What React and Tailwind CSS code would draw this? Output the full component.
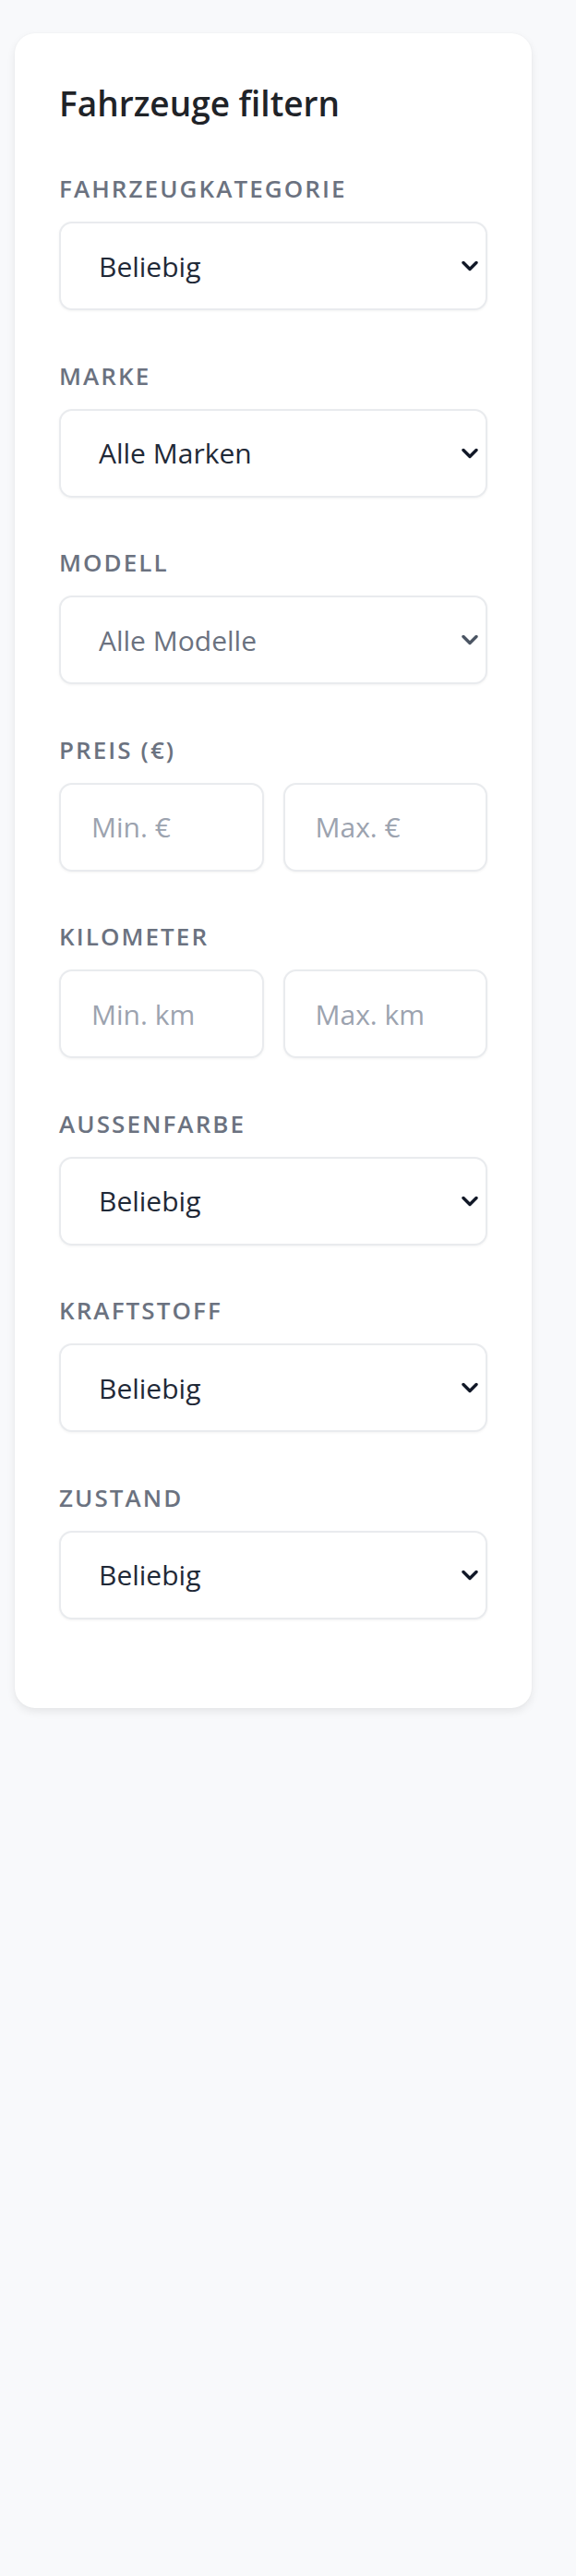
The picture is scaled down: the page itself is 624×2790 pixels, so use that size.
import React from 'react';

const font = { fontFamily: '"Open Sans", "Noto Sans", sans-serif' };

const Chevron = ({ muted }) => (
  <svg
    className="pointer-events-none absolute right-[9px] top-1/2 -translate-y-1/2"
    width="20"
    height="12"
    viewBox="0 0 20 12"
    fill="none"
    stroke={muted ? '#4b5563' : '#111827'}
    strokeWidth="3.4"
    strokeLinecap="round"
    strokeLinejoin="round"
  >
    <path d="M3 2.5l7 7 7-7" />
  </svg>
);

const FieldLabel = ({ children }) => (
  <label className="block mb-[18px] text-[26px] leading-[36px] font-semibold uppercase tracking-[0.08em] text-[#6b7280]">
    {children}
  </label>
);

const SelectField = ({ label, value, options, disabled }) => (
  <div className="mb-[52.5px] last:mb-0">
    <FieldLabel>{label}</FieldLabel>
    <div className="relative">
      <select
        disabled={disabled}
        defaultValue={value}
        className={`w-full h-[96px] appearance-none bg-white border-2 border-[#e9ebee] rounded-[14px] pl-[41px] pr-[48px] text-[30px] shadow-[0_1px_3px_rgba(0,0,0,0.05)] focus:outline-none ${disabled ? 'text-[#6b7280]' : 'text-[#1f2937]'}`}
        style={font}
      >
        {options.map((o) => (
          <option key={o}>{o}</option>
        ))}
      </select>
      <Chevron muted={disabled} />
    </div>
  </div>
);

const RangeField = ({ label, minText, maxText }) => (
  <div className="mb-[52.5px]">
    <FieldLabel>{label}</FieldLabel>
    <div className="grid grid-cols-2 gap-[21px]">
      <input
        type="number"
        placeholder={minText}
        className="w-full h-[96px] bg-white border-2 border-[#e9ebee] rounded-[14px] px-[33px] text-[30px] text-[#1f2937] placeholder:text-[#9ca3af] shadow-[0_1px_3px_rgba(0,0,0,0.05)] focus:outline-none"
        style={font}
      />
      <input
        type="number"
        placeholder={maxText}
        className="w-full h-[96px] bg-white border-2 border-[#e9ebee] rounded-[14px] px-[33px] text-[30px] text-[#1f2937] placeholder:text-[#9ca3af] shadow-[0_1px_3px_rgba(0,0,0,0.05)] focus:outline-none"
        style={font}
      />
    </div>
  </div>
);

export default function App() {
  return (
    <div className="min-h-[2790px] w-[624px] bg-[#f8f9fb] pt-[36px] pl-[16px]" style={font}>
      <aside className="w-[560px] bg-white rounded-[22px] shadow-[0_4px_10px_rgba(0,0,0,0.08),0_0_2px_rgba(0,0,0,0.04)] px-[48px] pt-[48px] pb-[96px]">
        <h2 className="text-[37px] leading-[56px] font-semibold text-[#1f2328] mb-[46px]">
          Fahrzeuge filtern
        </h2>

        <SelectField label="Fahrzeugkategorie" value="Beliebig" options={['Beliebig', 'PKW', 'SUV', 'Transporter', 'Motorrad']} />
        <SelectField label="Marke" value="Alle Marken" options={['Alle Marken', 'Audi', 'BMW', 'Mercedes-Benz', 'Volkswagen']} />
        <SelectField label="Modell" value="Alle Modelle" options={['Alle Modelle']} disabled />

        <RangeField label="Preis (€)" minText="Min. €" maxText="Max. €" />
        <RangeField label="Kilometer" minText="Min. km" maxText="Max. km" />

        <SelectField label="Außenfarbe" value="Beliebig" options={['Beliebig', 'Schwarz', 'Weiß', 'Silber', 'Blau', 'Rot']} />
        <SelectField label="Kraftstoff" value="Beliebig" options={['Beliebig', 'Benzin', 'Diesel', 'Elektro', 'Hybrid']} />
        <SelectField label="Zustand" value="Beliebig" options={['Beliebig', 'Neu', 'Gebraucht', 'Jahreswagen']} />
      </aside>
    </div>
  );
}
